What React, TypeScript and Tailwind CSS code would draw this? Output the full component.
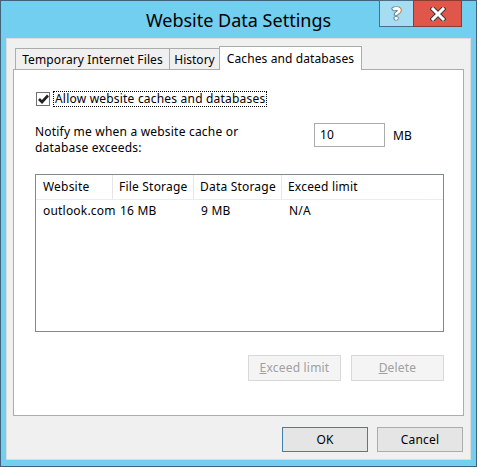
import { useState } from 'react';

const font = { fontFamily: '"Noto Sans", "Open Sans", sans-serif' };

function Tab({ label, active, width }: { label: string; active?: boolean; width: string }) {
  if (active) {
    return (
      <div
        className={`relative z-10 -mb-px flex h-[24px] items-center justify-center border border-b-0 border-[#acacac] bg-white text-[12px] text-black ${width}`}
      >
        {label}
      </div>
    );
  }
  return (
    <div
      className={`-mr-px flex h-[21px] items-center justify-center border border-b-0 border-[#acacac] bg-[#f0f0f0] pt-[1px] text-[12px] text-black ${width}`}
    >
      {label}
    </div>
  );
}

function DialogButton({ label, focused }: { label: string; focused?: boolean }) {
  return (
    <button
      className={`flex h-[25px] w-[86px] items-center justify-center border bg-[#e5e5e5] text-[12px] text-black ${
        focused ? 'border-[#3c7fb1]' : 'border-[#acacac]'
      }`}
    >
      {label}
    </button>
  );
}

export default function App() {
  const [allow, setAllow] = useState(true);

  return (
    <div style={font} className="flex h-[467px] w-[477px] flex-col border border-[#3f6378] bg-[#72cfef]">
      {/* title bar */}
      <div className="relative flex h-[37px] shrink-0 items-start justify-center">
        <div className="pt-[6px] text-[18px] text-black">Website Data Settings</div>
        <div className="absolute right-[14px] top-[-1px] flex">
          <div className="flex h-[27px] w-[35px] items-center justify-center border border-[#4b6f85] bg-[#a6ddf2] text-[18px] font-black text-white [text-shadow:0_0_1px_#222,0_0_1px_#222,0_0_1px_#222]">
            ?
          </div>
          <div className="-ml-px flex h-[27px] w-[49px] items-center justify-center border border-[#8c3b33] bg-[#e0564b]">
            <svg width="16" height="14" viewBox="0 0 16 14">
              <path d="M3 2 L13 12 M13 2 L3 12" stroke="#3a3a3a" strokeWidth="5" strokeLinecap="square" />
              <path d="M3 2 L13 12 M13 2 L3 12" stroke="#fff" strokeWidth="3" strokeLinecap="square" />
            </svg>
          </div>
        </div>
      </div>

      {/* client area */}
      <div className="mx-[5px] flex h-[422px] flex-col border border-[#dcdcdc] bg-[#f0f0f0] px-[6px] pt-[7px] tracking-[0.2px]">
        <div className="flex items-end pl-[2px]">
          <Tab label="Temporary Internet Files" width="w-[155px] tracking-[0.1px]" />
          <Tab label="History" width="w-[51px] tracking-normal" />
          <Tab label="Caches and databases" width="w-[143px] tracking-[0.1px]" active />
        </div>

        <div className="flex h-[347px] flex-col border border-[#acacac] bg-white pl-[21px] pr-[17px] pt-[21px] text-[12px] text-black">
          <label className="flex items-center gap-[3px]">
            <span
              onClick={() => setAllow(!allow)}
              className="ml-[1px] flex h-[14px] w-[14px] items-center justify-center border border-[#707070] bg-white"
            >
              {allow && (
                <svg width="11" height="10" viewBox="0 0 11 10">
                  <path d="M1 5 L4 8 L10 1.5" fill="none" stroke="#222" strokeWidth="2.6" />
                </svg>
              )}
            </span>
            <span className="border border-dotted border-black px-[1px] leading-[14px]">
              Allow website caches and databases
            </span>
          </label>

          <div className="mt-[16px] flex items-start">
            <div className="w-[279px] pt-[1px] leading-[16px]">
              Notify me when a website cache or
              <br />
              database exceeds:
            </div>
            <div className="flex h-[24px] w-[71px] items-center border border-[#acacac] px-[5px]">10</div>
            <div className="ml-[8px] pt-[4px]">MB</div>
          </div>

          <div className="mt-[18px] mr-[2px] h-[158px] border border-[#828790] bg-white">
            <div className="flex h-[25px] border-b border-[#e5eef5]">
              <div className="flex w-[77px] items-center border-r border-[#e5e5e5] pl-[7px]">Website</div>
              <div className="flex w-[81px] items-center border-r border-[#e5e5e5] pl-[6px]">File Storage</div>
              <div className="flex w-[88px] items-center border-r border-[#e5e5e5] pl-[6px]">Data Storage</div>
              <div className="flex flex-1 items-center pl-[6px]">Exceed limit</div>
            </div>
            <div className="flex h-[21px] items-center">
              <div className="w-[77px] pl-[7px]">outlook.com</div>
              <div className="w-[81px] pl-[7px]">16 MB</div>
              <div className="w-[88px] pl-[7px]">9 MB</div>
              <div className="flex-1 pl-[7px]">N/A</div>
            </div>
          </div>

          <div className="mt-[23px] mr-[2px] flex justify-end gap-[10px]">
            <button disabled className="h-[26px] w-[93px] border border-[#d9d9d9] bg-[#f4f4f4] text-[12px] text-[#a0a0a0]">
              <span className="underline">E</span>xceed limit
            </button>
            <button disabled className="h-[26px] w-[93px] border border-[#d9d9d9] bg-[#f4f4f4] text-[12px] text-[#a0a0a0]">
              <span className="underline">D</span>elete
            </button>
          </div>
        </div>

        <div className="mt-[11px] flex justify-end gap-[9px] pr-[1px]">
          <DialogButton label="OK" focused />
          <DialogButton label="Cancel" />
        </div>
      </div>
    </div>
  );
}
